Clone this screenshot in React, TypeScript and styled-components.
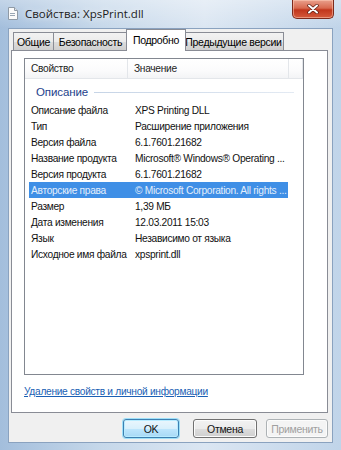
import styled, { createGlobalStyle } from "styled-components";

const GlobalStyle = createGlobalStyle`
    html, body {
        margin: 0;
        padding: 0;
        background: #b8cde3;
    }
    body {
        font-family: "Liberation Sans", "Noto Sans", sans-serif;
        font-size: 10.2px;
        letter-spacing: -0.3px;
        color: #000;
    }
`;

const rows = [
    ["Описание файла", "XPS Printing DLL"],
    ["Тип", "Расширение приложения"],
    ["Версия файла", "6.1.7601.21682"],
    ["Название продукта", "Microsoft® Windows® Operating ..."],
    ["Версия продукта", "6.1.7601.21682"],
    ["Авторские права", "© Microsoft Corporation. All rights ..."],
    ["Размер", "1,39 МБ"],
    ["Дата изменения", "12.03.2011 15:03"],
    ["Язык", "Независимо от языка"],
    ["Исходное имя файла", "xpsprint.dll"],
];

const tabs = ["Общие", "Безопасность", "Подробно", "Предыдущие версии"];
const tabWidths = [41, 75, 60, 101];

const Window = styled.div`
    width: 341px;
    height: 450px;
    display: flex;
    flex-direction: column;
    box-sizing: border-box;
    background: linear-gradient(90deg, #a3bedc 0%, #c6d8ea 30%, #dbe6f2 60%, #c0d4e9 100%);
    overflow: hidden;
`;

const TitleBar = styled.div`
    height: 28px;
    display: flex;
    align-items: flex-start;
    padding-left: 7px;
    background: linear-gradient(180deg, rgba(255,255,255,0.35), rgba(255,255,255,0));
`;

const TitleIcon = styled.svg`
    margin-top: 7px;
    width: 12px;
    height: 13px;
`;

const TitleText = styled.div`
    margin: 6px 0 0 6px;
    font-family: "Open Sans", "Liberation Sans", sans-serif;
    font-size: 11.5px;
    letter-spacing: 0;
    color: #1b1b1b;
    text-shadow: 0 0 6px rgba(255, 255, 255, 0.9);
    flex: 1;
`;

const CloseButton = styled.div`
    width: 42px;
    height: 19px;
    margin-right: 7px;
    box-sizing: border-box;
    border: 1px solid #7d2a1c;
    border-top: none;
    border-radius: 0 0 5px 5px;
    background: linear-gradient(180deg, #e9a08c 0%, #d8694f 45%, #c1361c 55%, #d55a3c 100%);
    box-shadow: inset 0 0 0 1px rgba(255, 210, 190, 0.5);
    display: flex;
    align-items: center;
    justify-content: center;
`;

const Client = styled.div`
    flex: 1;
    margin: 0 8px 7px 8px;
    border: 1px solid #8aa2bf;
    background: #f0f0f0;
    display: flex;
    flex-direction: column;
    padding: 0 4px 0 2px;
`;

const TabStrip = styled.div`
    height: 22px;
    display: flex;
    align-items: flex-end;
    padding-left: 2px;
    position: relative;
    z-index: 1;
    margin-bottom: -1px;
`;

const Tab = styled.div<{ $active?: boolean; $w: number }>`
    box-sizing: border-box;
    width: ${(p) => p.$w}px;
    height: ${(p) => (p.$active ? "22px" : "19px")};
    margin-right: ${(p) => (p.$active ? "-2px" : "0")};
    margin-left: ${(p) => (p.$active ? "-2px" : "-1px")};
    border: 1px solid #898c95;
    border-bottom: ${(p) => (p.$active ? "none" : "1px solid #898c95")};
    background: ${(p) =>
        p.$active ? "#fff" : "linear-gradient(180deg, #f2f2f2 0%, #ebebeb 50%, #dddddd 51%, #cfcfcf 100%)"};
    display: flex;
    justify-content: center;
    align-items: ${(p) => (p.$active ? "flex-start" : "center")};
    padding-top: ${(p) => (p.$active ? "4px" : "0")};
    position: relative;
    z-index: ${(p) => (p.$active ? 2 : 1)};
    white-space: nowrap;
    font-size: 10.5px;
    &:first-child {
        margin-left: 0;
    }
`;

const Panel = styled.div`
    height: 363px;
    box-sizing: border-box;
    background: #fff;
    border: 1px solid #898c95;
    padding: 7px 0 0 12px;
    display: flex;
    flex-direction: column;
`;

const ListView = styled.div`
    width: 280px;
    height: 317px;
    box-sizing: border-box;
    border: 1px solid #828790;
    display: flex;
    flex-direction: column;
`;

const Header = styled.div`
    height: 19px;
    display: flex;
    background: linear-gradient(180deg, #ffffff 0%, #fbfbfc 60%, #f3f4f6 100%);
    border-bottom: 1px solid #e3e6ea;
`;

const HeaderCell = styled.div<{ $w: number }>`
    width: ${(p) => p.$w}px;
    box-sizing: border-box;
    padding-left: 6px;
    border-right: 1px solid #e3e6ea;
    display: flex;
    align-items: center;
    color: #1e1e1e;
    flex: ${(p) => (p.$w ? "none" : "1")};
`;

const Group = styled.div`
    height: 16px;
    margin: 5px 0 2px 0;
    padding-left: 11px;
    display: flex;
    align-items: center;
    gap: 6px;
    color: #1e3f8c;
    font-size: 11.5px;
    letter-spacing: -0.1px;
    &::after {
        content: "";
        flex: 1;
        height: 1px;
        margin-right: 9px;
        background: linear-gradient(90deg, #c6d4e6, #e3eaf3);
    }
`;

const Row = styled.div<{ $selected?: boolean }>`
    height: 16px;
    margin: 0 15px 0 4px;
    display: flex;
    align-items: center;
    background: ${(p) => (p.$selected ? "#3f8fe6" : "transparent")};
    color: ${(p) => (p.$selected ? "#e3eefb" : "#111")};
    white-space: nowrap;
`;

const Cell = styled.div<{ $w?: number }>`
    width: ${(p) => (p.$w ? `${p.$w}px` : "auto")};
    flex: ${(p) => (p.$w ? "none" : "1")};
    padding-left: 2px;
    overflow: hidden;
`;

const Link = styled.a`
    margin-top: 11px;
    color: #1a5fb4;
    text-decoration: underline;
    cursor: pointer;
`;

const ButtonRow = styled.div`
    flex: 1;
    display: flex;
    justify-content: flex-end;
    align-items: flex-start;
    padding-top: 6px;
    gap: 9px;
`;

const Button = styled.div<{ $w: number; $default?: boolean; $disabled?: boolean }>`
    width: ${(p) => p.$w}px;
    height: 19px;
    box-sizing: border-box;
    border: 1px solid ${(p) => (p.$default ? "#3c7fb1" : p.$disabled ? "#adb2b5" : "#707070")};
    border-radius: 3px;
    background: ${(p) =>
        p.$disabled
            ? "#f4f4f4"
            : p.$default
            ? "linear-gradient(180deg, #eaf6fd 0%, #d9f0fc 50%, #bee6fd 51%, #a7d9f5 100%)"
            : "linear-gradient(180deg, #f2f2f2 0%, #ebebeb 50%, #dddddd 51%, #cfcfcf 100%)"};
    box-shadow: ${(p) => (p.$default ? "0 0 0 1px #9fe0f8, inset 0 0 0 1px #b8ecff" : "inset 0 0 0 1px #fcfcfc")};
    color: ${(p) => (p.$disabled ? "#a0a0a0" : "#111")};
    font-size: 10.5px;
    display: flex;
    align-items: center;
    justify-content: center;
    margin-right: ${(p) => (p.$default ? "5px" : "0")};
`;

function App() {
    return (
        <>
            <GlobalStyle />
            <Window>
                <TitleBar>
                    <TitleIcon viewBox="0 0 12 13">
                        <path d="M1.5 0.5h6l3 3v9h-9z" fill="#fbfbfb" stroke="#8f9aa6" />
                        <path d="M7.5 0.5v3h3" fill="#dfe4ea" stroke="#8f9aa6" />
                        <rect x="3" y="6" width="5" height="1" fill="#9aa7b5" />
                        <rect x="3" y="8" width="5" height="1" fill="#9aa7b5" />
                    </TitleIcon>
                    <TitleText>Свойства: XpsPrint.dll</TitleText>
                    <CloseButton>
                        <svg width="12" height="10" viewBox="0 0 12 10">
                            <path d="M2 1.5l8 7M10 1.5l-8 7" stroke="#5b1a10" strokeWidth="3.4" strokeLinecap="round" />
                            <path d="M2 1.5l8 7M10 1.5l-8 7" stroke="#fff" strokeWidth="2" strokeLinecap="round" />
                        </svg>
                    </CloseButton>
                </TitleBar>
                <Client>
                    <TabStrip>
                        {tabs.map((t, i) => (
                            <Tab key={t} $w={tabWidths[i]} $active={t === "Подробно"}>
                                {t}
                            </Tab>
                        ))}
                    </TabStrip>
                    <Panel>
                        <ListView>
                            <Header>
                                <HeaderCell $w={103}>Свойство</HeaderCell>
                                <HeaderCell $w={161}>Значение</HeaderCell>
                                <HeaderCell $w={0} />
                            </Header>
                            <Group>Описание</Group>
                            {rows.map(([k, v], i) => (
                                <Row key={k} $selected={i === 5}>
                                    <Cell $w={102}>{k}</Cell>
                                    <Cell>{v}</Cell>
                                </Row>
                            ))}
                        </ListView>
                        <Link>Удаление свойств и личной информации</Link>
                    </Panel>
                    <ButtonRow>
                        <Button $w={56} $default>OK</Button>
                        <Button $w={64}>Отмена</Button>
                        <Button $w={62} $disabled>Применить</Button>
                    </ButtonRow>
                </Client>
            </Window>
        </>
    );
}

export default App;
